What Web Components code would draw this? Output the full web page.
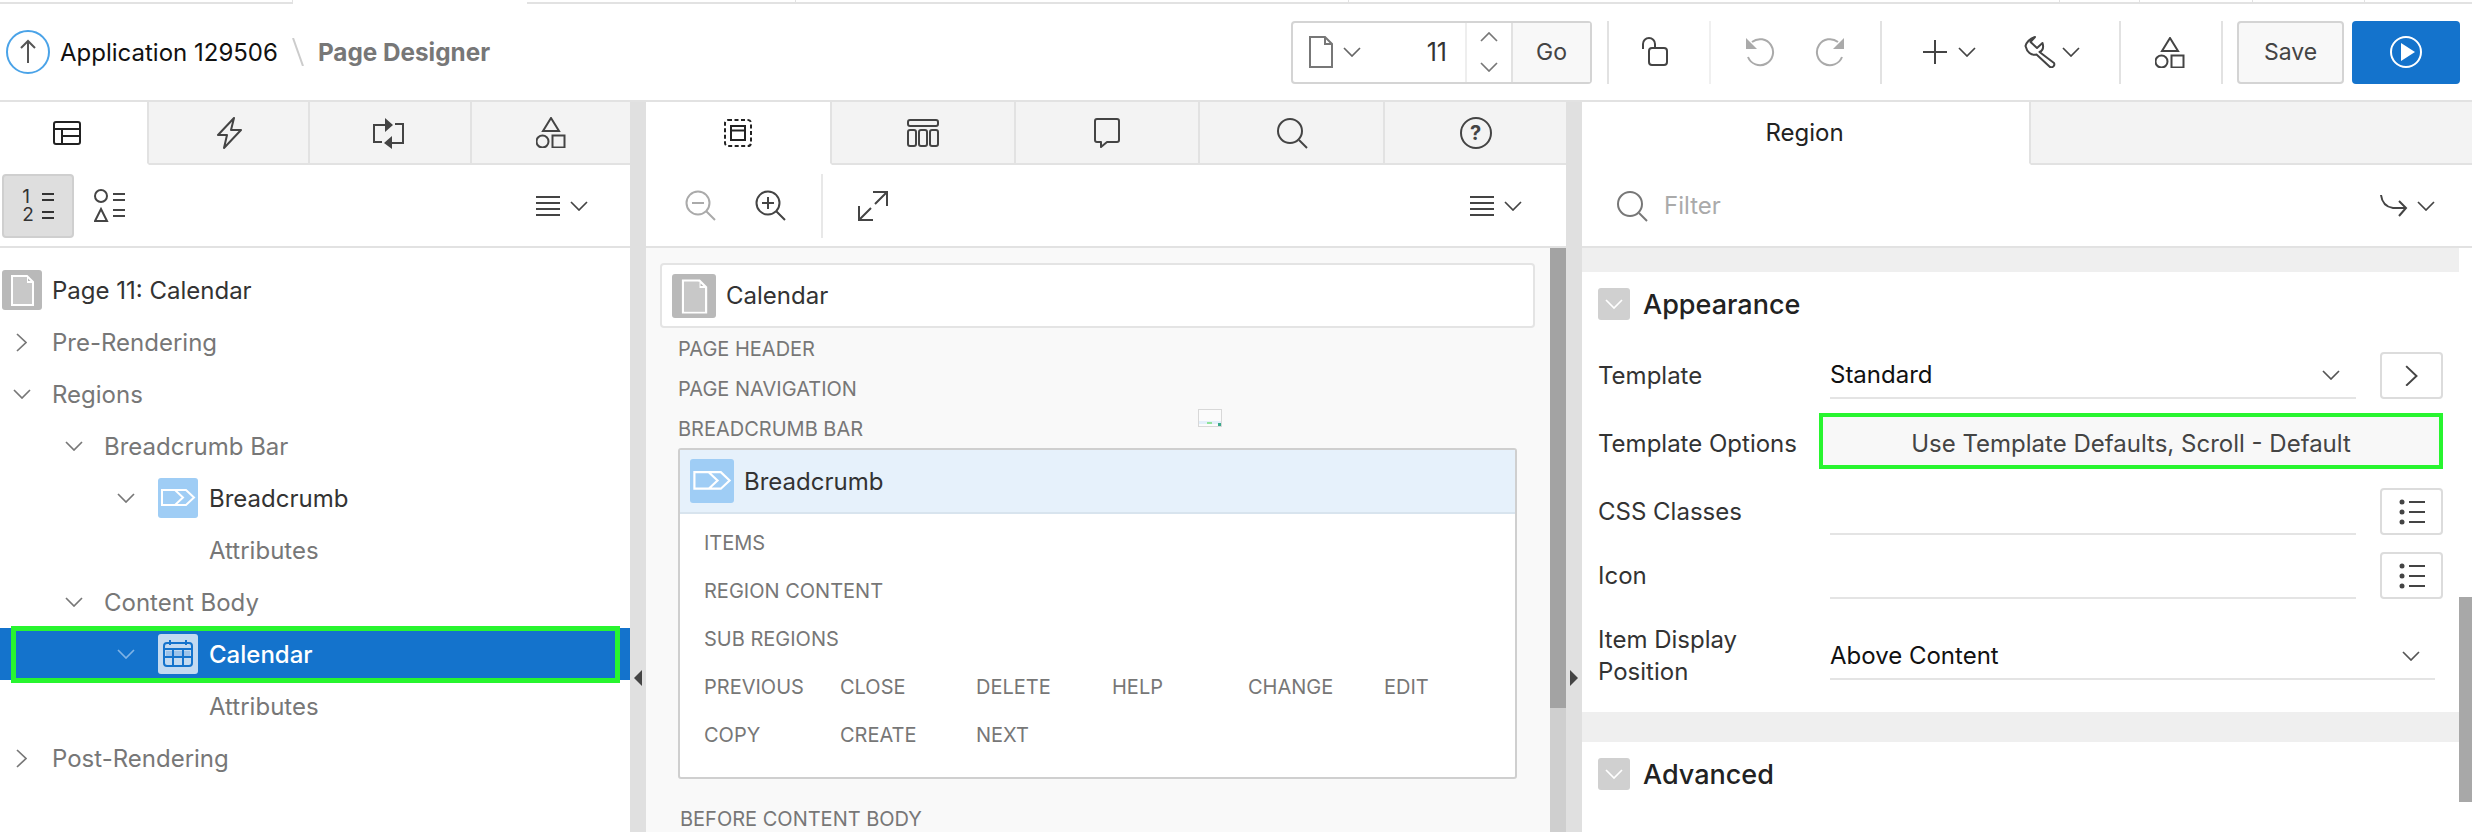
<!DOCTYPE html>
<html lang="en">
<head>
<meta charset="utf-8">
<title>Page Designer</title>
<style>
  html, body { margin: 0; padding: 0; height: 100%; background: #fff; }
  body { font-family: Inter, "Liberation Sans", sans-serif; font-size: 24px; color: #333; overflow: hidden; }
  pd-app { width: 2472px; height: 832px; }
</style>
</head>
<body>
<pd-app></pd-app>
<script>
const ICONS = {
  up: [44, 44, '<circle cx="22" cy="22" r="21" stroke="#4aa3e8"/><path d="M22 33V11M15 18l7-7 7 7" stroke="#555"/>'],
  page: [24, 32, '<path d="M1 1H16L23 8V31H1ZM16 1V8H23"/>'],
  chev: [18, 10, '<path stroke-width="1.700" d="M1 1L9 9L17 1"/>'],
  chevup: [18, 10, '<path stroke-width="1.700" d="M1 9L9 1L17 9"/>'],
  chevr: [11, 19, '<path stroke-width="1.700" d="M1 1L10 9.500L1 18"/>'],
  lock: [30, 30, '<rect x="9" y="11" width="18" height="17" rx="3"/><path d="M3 12V7a6 6 0 0 1 12 0V11"/>'],
  undo: [30, 30, '<path d="M7 5A13 13 0 1 1 3 20"/><path d="M1 1V12H12Z" fill="currentColor" stroke="none"/>'],
  redo: [30, 30, '<path d="M23 5A13 13 0 1 0 27 20"/><path d="M29 1V12H18Z" fill="currentColor" stroke="none"/>'],
  plus: [24, 24, '<path d="M12 0V24M0 12H24"/>'],
  wrench: [32, 32, '<path stroke-linejoin="round" d="M11 1L6.500 6L13 12L18.500 7C20 12 18 15 15.500 16L30 27A3 3 0 0 1 26 31L12.500 18.500C7 20 3 16 1.500 10C2 7 6 2 11 1Z"/>'],
  shapes: [30, 31, '<path d="M15 1L23 14H7Z"/><circle cx="6.500" cy="24.500" r="6"/><rect x="16.500" y="18.500" width="12" height="12"/>'],
  run: [34, 34, '<circle cx="17" cy="17" r="15" stroke="#fff"/><path d="M12 8L26 17L12 26Z" fill="#fff" stroke="none"/>'],
  layout: [28, 24, '<rect x="1" y="1" width="26" height="22" rx="2"/><path d="M1 8H27M9 8V23M9 15H27"/>'],
  bolt: [26, 32, '<path stroke-linejoin="round" d="M18 1L2 18H11L8 31L25 13H15Z"/>'],
  loop: [33, 32, '<path d="M14 8H2V25H10M19 26H31V7H23"/><path d="M13 1L21 8L13 15ZM20 19L12 26L20 32Z" fill="currentColor" stroke="none"/>'],
  numlines: [12, 26, '<path d="M0 1H12M0 7H12M0 19H12M0 25H12"/>'],
  types: [32, 34, '<circle cx="7" cy="7" r="6"/><path d="M7 20L13 32H1Z"/><path d="M19 5H31M19 11H31M19 21H31M19 27H31"/>'],
  menu: [24, 22, '<path d="M0 2H24M0 8H24M0 14H24M0 20H24"/>'],
  dash: [28, 28, '<rect x="1" y="1" width="26" height="26" rx="3" stroke-dasharray="4 2.500"/><rect x="7" y="7" width="14" height="14"/><path d="M7 11.500H21"/>'],
  cols: [32, 28, '<rect x="1" y="1" width="30" height="6" rx="2"/><rect x="1" y="11" width="8" height="16" rx="2"/><rect x="12" y="11" width="8" height="16" rx="2"/><rect x="23" y="11" width="8" height="16" rx="2"/>'],
  comment: [26, 30, '<path stroke-linejoin="round" d="M3 1H23A2 2 0 0 1 25 3V22A2 2 0 0 1 23 24H13L7 29V24H3A2 2 0 0 1 1 22V3A2 2 0 0 1 3 1Z"/>'],
  search: [32, 32, '<circle cx="14" cy="14" r="12"/><path d="M23 23L31 31"/>'],
  circle: [32, 32, '<circle cx="16" cy="16" r="15"/>'],
  zoomout: [32, 32, '<circle cx="13" cy="13" r="11.500"/><path d="M21 21L30 30M7 13H19"/>'],
  zoomin: [32, 32, '<circle cx="13" cy="13" r="11.500"/><path d="M21 21L30 30M7 13H19M13 7V19"/>'],
  expand: [30, 30, '<path d="M15 1H29V15M29 1L17 13M1 15V29H15M1 29L13 17"/>'],
  arrow: [28, 24, '<path d="M1 1C2 9 6 13 13 14H26M19 7L26 14L19 22"/>'],
  list: [26, 26, '<circle cx="3" cy="3" r="2.500" fill="currentColor" stroke="none"/><circle cx="3" cy="13" r="2.500" fill="currentColor" stroke="none"/><circle cx="3" cy="23" r="2.500" fill="currentColor" stroke="none"/><path d="M10 3H26M10 13H26M10 23H26"/>'],
  pagebox: [40, 40, '<path stroke="#fff" d="M10 6H25L31 12V35H10ZM25 6V12H31" /><path d="M11 7H25V13H30V34H11Z" fill="#c8c8c8" stroke="none"/>'],
  crumb: [40, 40, '<path stroke="#fff" d="M4 12H28L36 19.500L28 27H4ZM17 12L25 19.500L17 27"/>'],
  calendar: [40, 40, '<rect x="6" y="9" width="28" height="23" rx="3" stroke="#1473cc"/><path d="M6 15H34M15 15V32M25 15V32M6 23H34M12 6V11M28 6V11" stroke="#1473cc"/><path d="M8 17H14V22H8ZM16 17H24V22H16ZM26 17H32V22H26Z" fill="#9cc3ea" stroke="none"/>']
};

class AdIcon extends HTMLElement {
  connectedCallback() {
    const [w, h, body] = ICONS[this.getAttribute('name')];
    const scale = this.getAttribute('scale') || 1;
    this.attachShadow({ mode: 'open' }).innerHTML = `
      <style>:host { display: inline-flex; flex: none; } svg { display: block; }</style>
      <svg width="${w * scale}" height="${h * scale}" viewBox="0 0 ${w} ${h}" fill="none" stroke="currentColor" stroke-width="2">${body}</svg>`;
  }
}
customElements.define('ad-icon', AdIcon);

class PdHeader extends HTMLElement {
  constructor() {
    super();
    this.attachShadow({ mode: 'open' }).innerHTML = `
      <style>
        :host { display: block; height: 102px; box-sizing: border-box; border-bottom: 2px solid #e2e2e2; }
        .strip { display: flex; height: 4px; box-sizing: border-box; }
        .strip span { height: 4px; box-sizing: border-box; border-bottom: 2px solid #e2e2e2; border-right: 1px solid #e2e2e2; }
        .strip .gap { border: 0; }
        .bar { display: flex; align-items: center; height: 96px; padding-right: 12px; color: #444; }
        .crumbs { display: flex; align-items: center; padding-left: 6px; }
        .app { margin-left: 10px; color: #111; font-size: 24px; }
        .slash { width: 12px; height: 28px; margin: 0 14px 0 14px; }
        .here { color: #777; font-weight: 700; font-size: 24.300px; }
        .tools { display: flex; align-items: center; margin-left: auto; }
        .sep { width: 2px; height: 63px; background: #e2e2e2; flex: none; }
        .sep.soft { background: #f0f0f0; }
        .lookup { display: flex; width: 301px; height: 63px; box-sizing: border-box; border: 2px solid #d4d4d4; border-radius: 4px; flex: none; align-items: center; }
        .lookup .num { margin-left: 34px; width: 52px; text-align: right; font-size: 25px; color: #333; }
        .spin { display: flex; flex-direction: column; align-items: center; justify-content: center; gap: 20px; flex: none; box-sizing: border-box; width: 48px; height: 100%; margin-left: 18px; border-left: 2px solid #eee; border-right: 2px solid #e2e2e2; color: #777; }
        .go { flex: 1; height: 100%; display: flex; align-items: center; justify-content: center; background: #f8f8f8; font-size: 23px; color: #444; }
        .save, .run { display: flex; align-items: center; justify-content: center; height: 63px; box-sizing: border-box; border-radius: 4px; flex: none; }
        .save { width: 107px; margin-left: 14px; border: 2px solid #d4d4d4; background: #f8f8f8; font-size: 23px; color: #444; }
        .run { width: 108px; margin-left: 8px; background: #1473cc; }
      </style>
      <div class="strip">
        <span style="width:293px"></span><span class="gap" style="width:234px"></span>
        <span style="width:269px"></span><span style="width:553px"></span><span style="width:711px"></span>
        <span style="width:80px"></span><span style="width:113px"></span><span style="width:112px"></span><span style="width:107px;border-right:0"></span>
      </div>
      <div class="bar">
        <div class="crumbs">
          <ad-icon name="up"></ad-icon>
          <span class="app">Application 129506</span>
          <svg class="slash" viewBox="0 0 12 28"><path d="M1 0L11 28" stroke="#ccc" stroke-width="2"/></svg>
          <span class="here">Page Designer</span>
        </div>
        <div class="tools">
          <div class="lookup">
            <ad-icon name="page" style="margin-left:16px;color:#777"></ad-icon>
            <ad-icon name="chev" style="margin-left:10px;color:#666"></ad-icon>
            <span class="num">11</span>
            <div class="spin"><ad-icon name="chevup"></ad-icon><ad-icon name="chev"></ad-icon></div>
            <div class="go">Go</div>
          </div>
          <span class="sep" style="margin-left:15px"></span>
          <ad-icon name="lock" style="margin-left:31px"></ad-icon>
          <span class="sep soft" style="margin-left:39px"></span>
          <ad-icon name="undo" style="margin-left:34px;color:#aaa"></ad-icon>
          <ad-icon name="redo" style="margin-left:40px;color:#aaa"></ad-icon>
          <span class="sep" style="margin-left:35px"></span>
          <ad-icon name="plus" style="margin-left:41px"></ad-icon>
          <ad-icon name="chev" style="margin-left:11px"></ad-icon>
          <ad-icon name="wrench" style="margin-left:48px"></ad-icon>
          <ad-icon name="chev" style="margin-left:6px"></ad-icon>
          <span class="sep" style="margin-left:39px"></span>
          <ad-icon name="shapes" style="margin-left:34px"></ad-icon>
          <span class="sep" style="margin-left:36px"></span>
          <div class="save">Save</div>
          <div class="run"><ad-icon name="run"></ad-icon></div>
        </div>
      </div>`;
  }
}
customElements.define('pd-header', PdHeader);

class PdTab extends HTMLElement {
  constructor() {
    super();
    this.attachShadow({ mode: 'open' }).innerHTML = `
      <style>
        :host { display: flex; align-items: center; justify-content: center; flex: none; box-sizing: border-box; height: 63px;
          background: #f3f3f3; border-right: 2px solid #e2e2e2; border-bottom: 2px solid #e2e2e2; color: #444; font-size: 24px; }
        :host([active]) { background: #fff; border-bottom-color: #fff; color: #222; }
      </style>
      <slot></slot>`;
  }
}
customElements.define('pd-tab', PdTab);

class PdToolbar extends HTMLElement {
  constructor() {
    super();
    this.attachShadow({ mode: 'open' }).innerHTML = `
      <style>
        :host { display: flex; align-items: center; height: 83px; box-sizing: border-box; border-bottom: 2px solid #e2e2e2; color: #444; }
      </style>
      <slot></slot>`;
  }
}
customElements.define('pd-toolbar', PdToolbar);

class HelpGlyph extends HTMLElement {
  constructor() {
    super();
    this.attachShadow({ mode: 'open' }).innerHTML = `
      <style>
        :host { display: inline-flex; position: relative; width: 32px; height: 32px; }
        b { position: absolute; inset: 0; display: flex; align-items: center; justify-content: center; font-size: 20px; line-height: 32px; color: #444; }
      </style>
      <ad-icon name="circle"></ad-icon><b>?</b>`;
  }
}
customElements.define('help-glyph', HelpGlyph);

class TreeRow extends HTMLElement {
  connectedCallback() {
    const indent = this.getAttribute('indent') || 0;
    const chev = this.getAttribute('chev');
    const icon = this.getAttribute('icon');
    const chevIcon = chev === 'down' ? '<ad-icon name="chev"></ad-icon>' : chev === 'right' ? '<ad-icon name="chevr" style="margin-left:3px"></ad-icon>' : '';
    const iconBox = icon ? `<span class="ico ${icon}"><ad-icon name="${icon}"></ad-icon></span>` : '';
    this.attachShadow({ mode: 'open' }).innerHTML = `
      <style>
        :host { display: flex; align-items: center; position: relative; height: 52px; padding-left: ${indent}px; color: #777; font-size: 24px; }
        :host([strong]) { color: #333; }
        :host([selected]) { background: #1473cc; color: #fff; font-weight: 500; }
        :host([selected])::after { content: ""; position: absolute; left: 11px; right: 10px; top: -2px; bottom: -3px; border: 5px solid #28f52f; }
        .c { width: 39px; flex: none; color: #777; display: flex; align-items: center; }
        .c.none { display: none; }
        :host([selected]) .c { color: #7fb3e6; }
        .ico { width: 40px; height: 40px; border-radius: 3px; margin: 0 11px 0 2px; flex: none; display: flex; }
        .pagebox { background: #b9b9b9; margin-left: 0; margin-right: 10px; }
        .crumb { background: #9fcdf5; }
        .calendar { background: #c3daf1; }
      </style>
      <span class="c ${this.hasAttribute('nochev') ? 'none' : ''}">${chevIcon}</span>${iconBox}<slot></slot>`;
  }
}
customElements.define('tree-row', TreeRow);

class PdSplitter extends HTMLElement {
  constructor() {
    super();
    this.attachShadow({ mode: 'open' }).innerHTML = `
      <style>
        :host { display: block; position: relative; width: 16px; flex: none; background: #e0e0e0; }
        i { position: absolute; top: 568px; left: 4px; width: 0; height: 0; border: 8px solid transparent; border-left: 0; border-right: 8px solid #444; }
        :host([dir-right]) i { border-right: 0; border-left: 8px solid #444; }
      </style>
      <i></i>`;
  }
}
customElements.define('pd-splitter', PdSplitter);

class ComponentBlock extends HTMLElement {
  constructor() {
    super();
    this.attachShadow({ mode: 'open' }).innerHTML = `
      <style>
        :host { display: block; margin-left: 18px; width: 839px; height: 331px; box-sizing: border-box; border: 2px solid #cfcfcf; border-radius: 3px; background: #fff; }
        .head { display: flex; align-items: center; height: 64px; box-sizing: border-box; padding-left: 10px; background: #e6f1fb; border-bottom: 2px solid #d8e4ee; color: #333; font-size: 24px; }
        .ico { display: flex; align-items: center; justify-content: center; width: 44px; height: 44px; margin-right: 10px; border-radius: 3px; background: #9fcdf5; }
        .grid { display: grid; grid-template-columns: repeat(6, 136px); grid-auto-rows: 48px; padding: 5px 0 0 24px; align-items: center; }
        .wide { grid-column: 1 / -1; }
        .grid span { color: #777; font-size: 20px; }
      </style>
      <div class="head"><span class="ico"><ad-icon name="crumb" scale="1.100"></ad-icon></span>Breadcrumb</div>
      <div class="grid">
        <span class="wide">ITEMS</span><span class="wide">REGION CONTENT</span><span class="wide">SUB REGIONS</span>
        <span>PREVIOUS</span><span>CLOSE</span><span>DELETE</span><span>HELP</span><span>CHANGE</span><span>EDIT</span>
        <span>COPY</span><span>CREATE</span><span>NEXT</span>
      </div>`;
  }
}
customElements.define('component-block', ComponentBlock);

class SectionHead extends HTMLElement {
  constructor() {
    super();
    this.attachShadow({ mode: 'open' }).innerHTML = `
      <style>
        :host { display: flex; align-items: center; height: 32px; padding-left: 16px; color: #222; font-size: 27px; font-weight: 500; }
        .box { display: flex; align-items: center; justify-content: center; width: 32px; height: 32px; margin-right: 13px; border-radius: 3px; background: #d0d0d0; color: #fff; }
      </style>
      <span class="box"><ad-icon name="chev"></ad-icon></span><slot></slot>`;
  }
}
customElements.define('section-head', SectionHead);

class PropRow extends HTMLElement {
  connectedCallback() {
    const value = this.getAttribute('value') || '';
    const chev = this.hasAttribute('chev');
    const btn = this.getAttribute('btn');
    const wide = this.hasAttribute('wide');
    this.attachShadow({ mode: 'open' }).innerHTML = `
      <style>
        :host { display: flex; align-items: flex-end; padding-left: 16px; min-height: 47px; color: #333; font-size: 24px; }
        .label { width: 232px; flex: none; line-height: 32px; align-self: ${wide ? 'flex-end' : 'center'}; margin-bottom: ${wide ? -8 : 0}px; }
        .field { display: flex; align-items: center; justify-content: space-between; box-sizing: border-box; height: 47px; width: ${wide ? 605 : 526}px;
          padding-right: ${wide ? 15 : 16}px; border-bottom: 2px solid #e4e4e4; color: #111; flex: none; }
        .field ad-icon { color: #555; }
        .btn { display: flex; align-items: center; justify-content: center; box-sizing: border-box; width: 63px; height: 47px; margin-left: 24px;
          border: 2px solid #dcdcdc; border-radius: 4px; color: #444; flex: none; }
      </style>
      <span class="label"><slot></slot></span>
      <div class="field"><span>${value}</span>${chev ? '<ad-icon name="chev"></ad-icon>' : ''}</div>
      ${btn ? `<div class="btn"><ad-icon name="${btn}" ${btn === 'chevr' ? 'scale="1.150"' : ''}></ad-icon></div>` : ''}`;
  }
}
customElements.define('prop-row', PropRow);

class OptionRow extends HTMLElement {
  connectedCallback() {
    this.attachShadow({ mode: 'open' }).innerHTML = `
      <style>
        :host { display: flex; align-items: center; padding-left: 16px; height: 56px; color: #333; font-size: 24px; }
        .label { width: 221px; flex: none; padding-top: 5px; }
        .opt { display: flex; align-items: center; justify-content: center; width: 624px; height: 56px; box-sizing: border-box; padding-top: 5px; border: 4px solid #28f52f; background: #f8f8f8; color: #444; flex: none; }
      </style>
      <span class="label"><slot></slot></span>
      <div class="opt">${this.getAttribute('value')}</div>`;
  }
}
customElements.define('option-row', OptionRow);

class PdApp extends HTMLElement {
  constructor() {
    super();
    this.attachShadow({ mode: 'open' }).innerHTML = `
      <style>
        :host { display: flex; flex-direction: column; overflow: hidden; }
        .main { display: flex; flex: 1; min-height: 0; }
        .tabs { display: flex; }
        .panel { display: flex; flex-direction: column; flex: none; overflow: hidden; }
        .left { width: 630px; }
        .center { width: 920px; }
        .right { width: 890px; }
        .tree { padding-top: 16px; }
        .toggle { display: grid; grid-template-columns: auto auto; column-gap: 8px; align-items: center; justify-content: center; box-sizing: border-box; width: 72px; height: 64px; margin-left: 2px; background: #dedede; border: 2px solid #cfcfcf; border-radius: 4px; color: #333; }
        .toggle .nums { font-size: 19px; line-height: 18px; white-space: pre-line; }
        .split { flex: 1; display: flex; min-height: 0; }
        .canvas { position: relative; flex: 1; padding: 15px 0 0 14px; background: #f9f9f9; overflow: hidden; }
        .card { display: flex; align-items: center; box-sizing: border-box; width: 875px; height: 65px; padding-left: 10px; background: #fff; border: 2px solid #e4e4e4; border-radius: 4px; color: #333; font-size: 24px; }
        .card .ico { display: flex; align-items: center; justify-content: center; width: 44px; height: 44px; margin-right: 10px; border-radius: 3px; background: #b9b9b9; }
        .cap { height: 40px; line-height: 42px; margin-left: 18px; color: #777; font-size: 20px; }
        .thumb { position: absolute; left: 552px; top: 161px; width: 24px; height: 18px; box-sizing: border-box; border: 1px solid #d8d8d8; background: linear-gradient(#fbfbfb 0 11px, #e3effa 11px 14px, #fbfbfb 14px); }
        .thumb i { position: absolute; left: 8px; top: 12px; width: 5px; height: 2px; background: #8fe39a; }
        .thumb b { position: absolute; right: 0; bottom: 0; width: 3px; height: 3px; background: #3aa98a; }
        .scroll { display: flex; flex-direction: column; width: 16px; flex: none; background: #cfcfcf; }
        .scroll i { display: block; height: 460px; background: #a3a3a3; }
        .filter { color: #aaa; font-size: 24px; margin-left: 16px; }
        .props { flex: 1; overflow: hidden; }
        .band { height: 24px; background: #efefef; }
        .band.b2 { height: 30px; }
        .rail { display: flex; flex-direction: column; width: 13px; flex: none; padding-top: 349px; }
        .rail i { display: block; height: 205px; background: #a8a8a8; }
      </style>
      <pd-header></pd-header>
      <div class="main">
        <section class="panel left">
          <div class="tabs">
            <pd-tab active style="width:149px"><ad-icon name="layout" style="margin-right:14px"></ad-icon></pd-tab>
            <pd-tab style="width:161px"><ad-icon name="bolt"></ad-icon></pd-tab>
            <pd-tab style="width:162px"><ad-icon name="loop" style="margin-right:4px"></ad-icon></pd-tab>
            <pd-tab style="width:158px;border-right:0"><ad-icon name="shapes"></ad-icon></pd-tab>
          </div>
          <pd-toolbar>
            <div class="toggle"><span class="nums">1
2</span><ad-icon name="numlines"></ad-icon></div>
            <ad-icon name="types" style="margin-left:20px"></ad-icon>
            <ad-icon name="menu" style="margin-left:410px"></ad-icon>
            <ad-icon name="chev" style="margin-left:10px"></ad-icon>
          </pd-toolbar>
          <div class="tree">
            <tree-row indent="2" nochev strong icon="pagebox">Page 11: Calendar</tree-row>
            <tree-row indent="13" chev="right">Pre-Rendering</tree-row>
            <tree-row indent="13" chev="down">Regions</tree-row>
            <tree-row indent="65" chev="down">Breadcrumb Bar</tree-row>
            <tree-row indent="117" chev="down" strong icon="crumb">Breadcrumb</tree-row>
            <tree-row indent="170">Attributes</tree-row>
            <tree-row indent="65" chev="down">Content Body</tree-row>
            <tree-row indent="117" chev="down" selected icon="calendar">Calendar</tree-row>
            <tree-row indent="170">Attributes</tree-row>
            <tree-row indent="13" chev="right">Post-Rendering</tree-row>
          </div>
        </section>
        <pd-splitter></pd-splitter>
        <section class="panel center">
          <div class="tabs">
            <pd-tab active style="width:186px"><ad-icon name="dash"></ad-icon></pd-tab>
            <pd-tab style="width:184px"><ad-icon name="cols"></ad-icon></pd-tab>
            <pd-tab style="width:184px"><ad-icon name="comment"></ad-icon></pd-tab>
            <pd-tab style="width:185px"><ad-icon name="search"></ad-icon></pd-tab>
            <pd-tab style="width:181px;border-right:0"><help-glyph></help-glyph></pd-tab>
          </div>
          <pd-toolbar>
            <ad-icon name="zoomout" style="margin-left:39px;color:#aaa"></ad-icon>
            <ad-icon name="zoomin" style="margin-left:38px"></ad-icon>
            <span style="width:2px;height:64px;margin-left:34px;background:#e8e8e8"></span>
            <ad-icon name="expand" style="margin-left:35px"></ad-icon>
            <ad-icon name="menu" style="margin-left:582px"></ad-icon>
            <ad-icon name="chev" style="margin-left:10px"></ad-icon>
          </pd-toolbar>
          <div class="split">
            <div class="canvas">
              <div class="card"><span class="ico"><ad-icon name="pagebox" scale="1.100"></ad-icon></span>Calendar</div>
              <div class="cap">PAGE HEADER</div>
              <div class="cap">PAGE NAVIGATION</div>
              <div class="cap">BREADCRUMB BAR</div>
              <component-block></component-block>
              <div class="cap" style="margin-top:19px;margin-left:20px">BEFORE CONTENT BODY</div>
              <div class="thumb"><i></i><b></b></div>
            </div>
            <div class="scroll"><i></i></div>
          </div>
        </section>
        <pd-splitter dir-right></pd-splitter>
        <section class="panel right">
          <div class="tabs">
            <pd-tab active style="width:449px"><span style="margin-right:2px">Region</span></pd-tab>
            <pd-tab style="flex:1;border-right:0"></pd-tab>
          </div>
          <pd-toolbar>
            <ad-icon name="search" style="margin-left:34px;color:#777"></ad-icon>
            <span class="filter">Filter</span>
            <ad-icon name="arrow" style="margin-left:auto"></ad-icon>
            <ad-icon name="chev" style="margin-left:9px;margin-right:37px"></ad-icon>
          </pd-toolbar>
          <div class="split">
            <div class="props">
              <div class="band"></div>
              <section-head style="margin-top:16px">Appearance</section-head>
              <prop-row value="Standard" chev btn="chevr" style="margin-top:32px">Template</prop-row>
              <option-row value="Use Template Defaults, Scroll - Default" style="margin-top:14px">Template Options</option-row>
              <prop-row btn="list" style="margin-top:19px">CSS Classes</prop-row>
              <prop-row btn="list" style="margin-top:17px">Icon</prop-row>
              <prop-row value="Above Content" chev wide style="margin-top:26px;height:55px">Item Display<br>Position</prop-row>
              <div class="band b2" style="margin-top:32px"></div>
              <section-head style="margin-top:16px">Advanced</section-head>
            </div>
            <div class="rail"><i></i></div>
          </div>
        </section>
      </div>`;
  }
}
customElements.define('pd-app', PdApp);
</script>
</body>
</html>
